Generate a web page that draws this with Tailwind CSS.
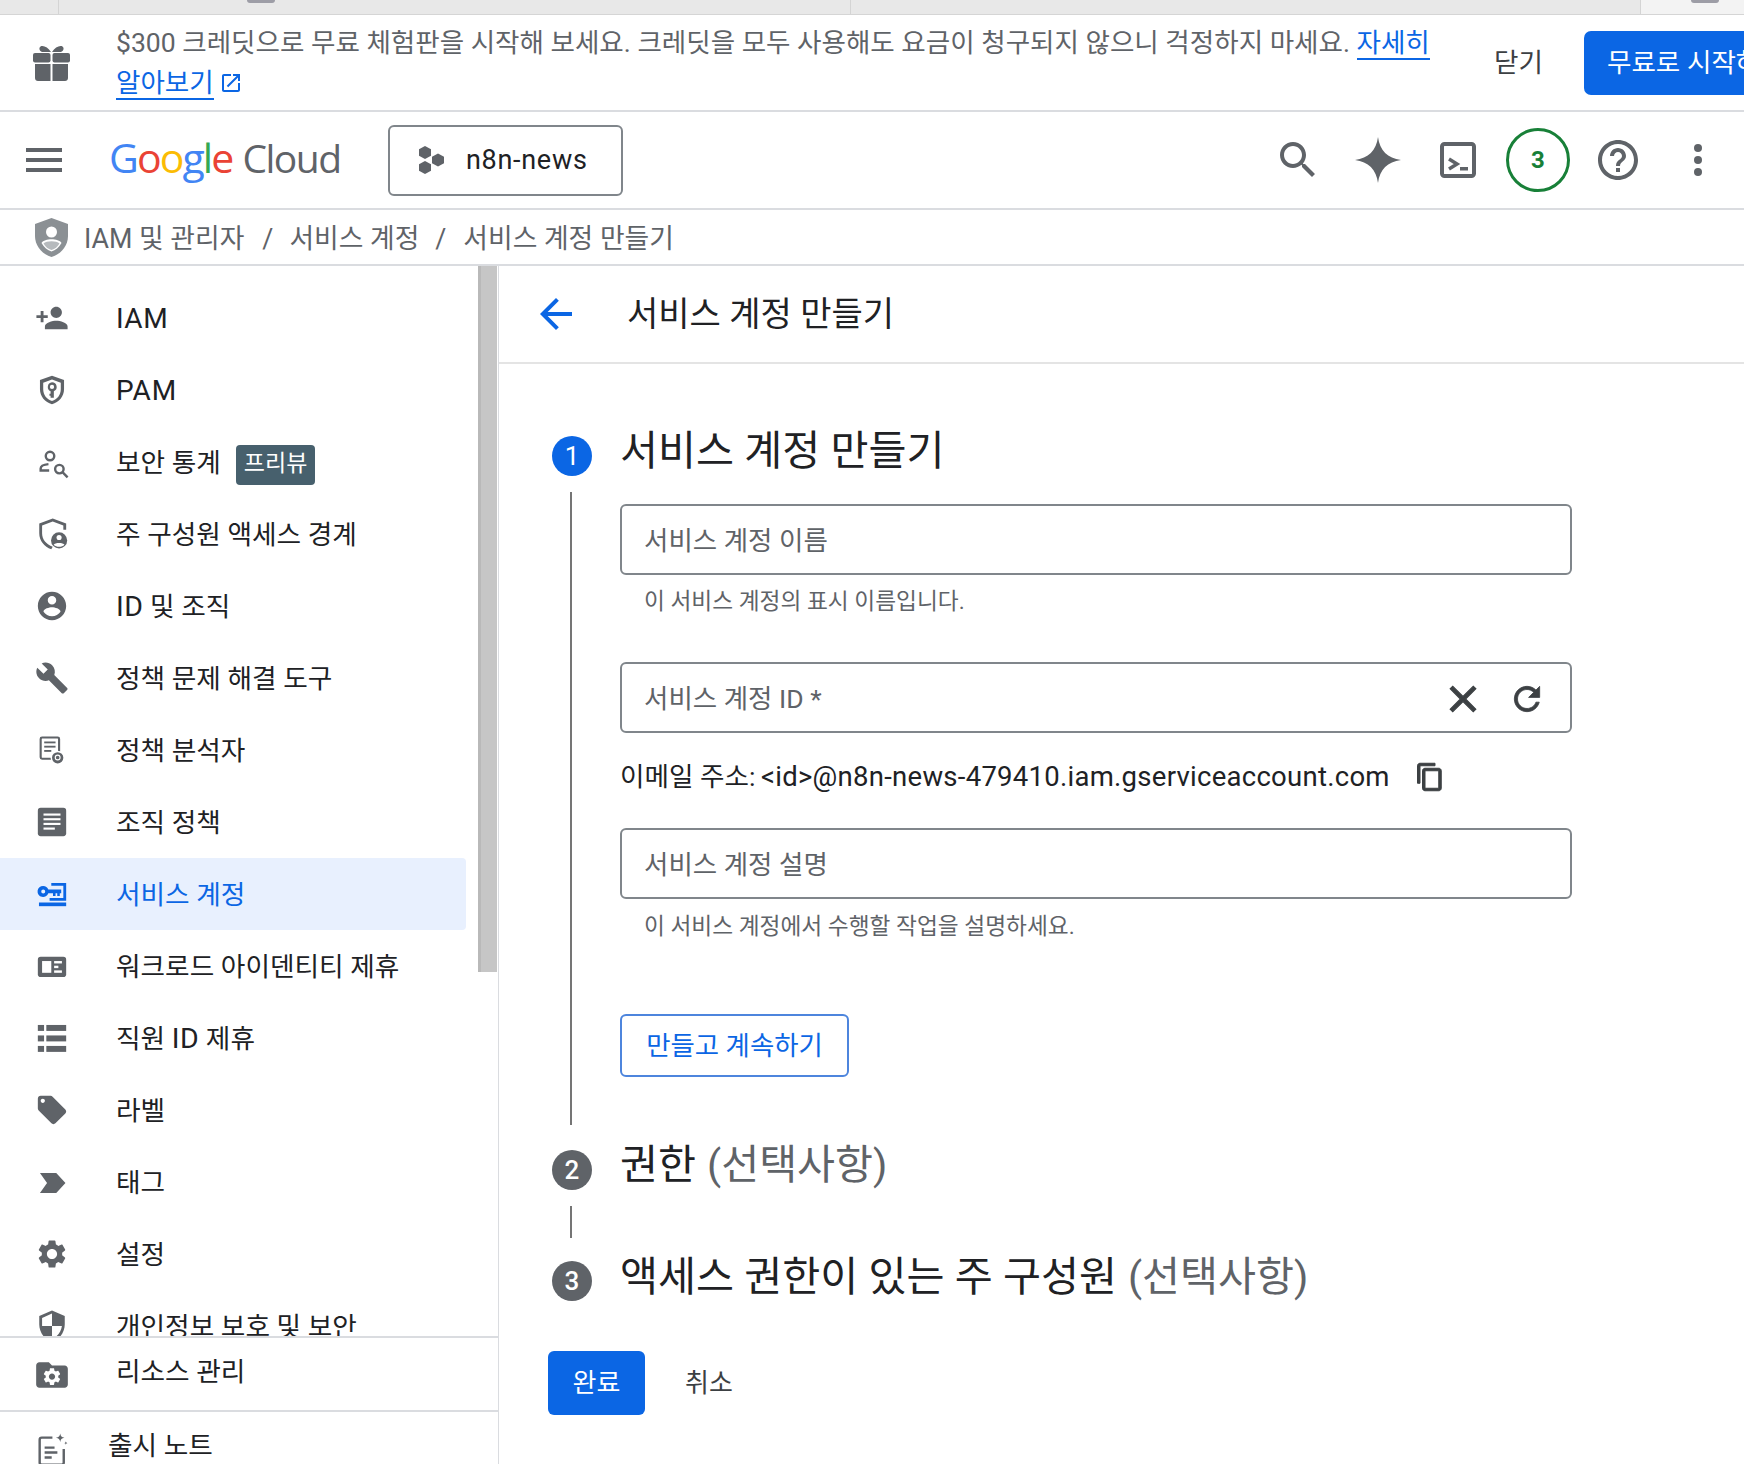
<!DOCTYPE html>
<html lang="ko">
<head>
<meta charset="utf-8">
<script src="https://cdn.jsdelivr.net/npm/@tailwindcss/browser@4"></script>
</head>
<body class="m-0 bg-white">
<div class="w-[1744px] h-[1464px] overflow-hidden flex flex-col bg-white text-[#202124] font-['Roboto','Noto_Sans_CJK_KR',sans-serif]">

  <!-- browser tab strip -->
  <div class="h-[15px] shrink-0 flex bg-[#e8e8e8] border-b border-[#d5d5d5]">
    <div class="w-[59px] border-r border-[#d4d4d4]"></div>
    <div class="w-[792px] border-r border-[#d4d4d4] pl-[188px]"><div class="w-[28px] h-[3px] rounded-b-[3px] bg-[#9d9da6]"></div></div>
    <div class="w-[790px] border-r border-[#d4d4d4]"></div>
    <div class="flex-1 bg-[#f3f3f3] pl-[50px]"><div class="w-[28px] h-[3px] rounded-b-[3px] bg-[#9d9da6]"></div></div>
  </div>

  <!-- trial banner -->
  <div class="h-[97px] shrink-0 flex items-center border-b-2 border-[#dadce0] whitespace-nowrap">
    <svg class="ml-[33px] w-[37px] h-[36px] shrink-0 fill-[#5f6368]" viewBox="0 0 37 36"><path d="M18 7C15 2 10 0 7.500 1.500 5.500 3 6.500 6 9 7zM19 7c3-5 8-7 10.500-5.500 2 1.500 1 4.500-1.500 5.500z"/><rect x="0" y="8" width="17.500" height="9.500" rx="2"/><rect x="19.500" y="8" width="17.500" height="9.500" rx="2"/><path d="M2 19h15.500v17H5c-1.700 0-3-1.300-3-3zM19.500 19H35v14c0 1.700-1.300 3-3 3H19.500z"/></svg>
    <div class="ml-[46px] w-[1331px] shrink-0 h-[80px] text-[26.55px] leading-[40px] text-[#5f6368] whitespace-normal break-keep">$300 크레딧으로 무료 체험판을 시작해 보세요. 크레딧을 모두 사용해도 요금이 청구되지 않으니 걱정하지 마세요. <a class="text-[#0b66e4] border-b-2 border-[#0b66e4]">자세히 알아보기</a> <svg class="inline-block align-[-3px] w-[24px] h-[24px] fill-[#0b66e4] -ml-[1px]" viewBox="0 0 24 24"><path d="M19 19H5V5h7V3H5c-1.110 0-2 .9-2 2v14c0 1.100.89 2 2 2h14c1.100 0 2-.9 2-2v-7h-2v7zM14 3v2h3.590l-9.830 9.830 1.410 1.410L19 6.410V10h2V3h-7z"/></svg></div>
    <span class="ml-[47px] text-[26.6px] text-[#3c4043]">닫기</span>
    <div class="ml-[41px] h-[64px] w-[260px] shrink-0 flex items-center pl-[23px] rounded-[7px] bg-[#0b66e4] text-white text-[26.6px]">무료로 시작하기</div>
  </div>

  <!-- top bar -->
  <div class="h-[98px] shrink-0 flex items-center border-b-2 border-[#dadce0]">
    <div class="ml-[26px] w-[36px] h-[24px] flex flex-col justify-between"><div class="h-[4px] bg-[#5f6368]"></div><div class="h-[4px] bg-[#5f6368]"></div><div class="h-[4px] bg-[#5f6368]"></div></div>
    <div class="ml-[47px] mb-[6px] w-[279px] flex items-baseline text-[41px] leading-[48px] tracking-[-1.9px] font-['Open_Sans','Roboto',sans-serif]"><span class="font-medium text-[#4285f4]">G</span><span class="font-medium text-[#ea4335]">o</span><span class="font-medium text-[#fbbc04]">o</span><span class="font-medium text-[#4285f4]">g</span><span class="font-medium text-[#34a853]">l</span><span class="font-medium text-[#ea4335]">e</span><span class="ml-[10px] text-[39px] tracking-[-1.5px] text-[#5f6368]">Cloud</span></div>
    <div class="h-[71px] w-[235px] flex items-center rounded-[6px] border-2 border-[#80868b]">
      <svg class="ml-[28px] w-[26px] h-[28px] fill-[#5f6368]" viewBox="0 0 26 28"><polygon points="7,0 13,3.300 13,9.700 7,13 1,9.700 1,3.300"/><polygon points="7,15 13,18.300 13,24.700 7,28 1,24.700 1,18.300"/><polygon points="20,7.500 26,10.800 26,17.200 20,20.500 14,17.200 14,10.800"/></svg>
      <span class="ml-[22px] text-[27px] tracking-[0.7px]">n8n-news</span>
    </div>
    <div class="ml-auto mr-[6px] flex items-center">
      <div class="w-[80px] flex justify-center"><svg class="w-[48px] h-[48px] fill-[#5f6368]" viewBox="0 0 24 24"><path d="M15.500 14h-.79l-.28-.27C15.410 12.590 16 11.110 16 9.500 16 5.910 13.090 3 9.500 3S3 5.910 3 9.500 5.910 16 9.500 16c1.610 0 3.090-.59 4.230-1.570l.27.28v.79l5 4.990L20.490 19l-4.990-5zm-6 0C7.010 14 5 11.990 5 9.500S7.010 5 9.500 5 14 7.010 14 9.500 11.990 14 9.500 14z"/></svg></div>
      <div class="w-[80px] flex justify-center"><svg class="w-[46px] h-[46px] fill-[#5f6368]" viewBox="0 0 24 24"><path d="M12 0C12.900 7 17 11.100 24 12 17 12.900 12.900 17 12 24 11.100 17 7 12.900 0 12 7 11.100 11.100 7 12 0Z"/></svg></div>
      <div class="w-[80px] flex justify-center"><svg class="w-[36px] h-[36px]" viewBox="0 0 36 36"><rect x="2" y="2" width="32" height="32" rx="2.500" fill="none" stroke="#5f6368" stroke-width="4"/><polyline points="9,17 17,22 9,27" fill="none" stroke="#5f6368" stroke-width="3.500"/><rect x="20" y="25" width="8" height="3.500" fill="#5f6368"/></svg></div>
      <div class="w-[80px] flex justify-center"><div class="w-[64px] h-[64px] rounded-full border-[3px] border-[#188038] flex items-center justify-center text-[24px] font-bold text-[#188038]">3</div></div>
      <div class="w-[80px] flex justify-center"><svg class="w-[48px] h-[48px] fill-[#5f6368]" viewBox="0 0 24 24"><path d="M11 18h2v-2h-2v2zm1-16C6.480 2 2 6.480 2 12s4.480 10 10 10 10-4.480 10-10S17.520 2 12 2zm0 18c-4.410 0-8-3.590-8-8s3.590-8 8-8 8 3.590 8 8-3.590 8-8 8zm0-14c-2.210 0-4 1.790-4 4h2c0-1.100.9-2 2-2s2 .9 2 2c0 2-3 1.750-3 5h2c0-2.250 3-2.500 3-5 0-2.210-1.790-4-4-4z"/></svg></div>
      <div class="w-[80px] flex flex-col items-center gap-[4px]"><div class="w-[8px] h-[8px] rounded-full bg-[#5f6368]"></div><div class="w-[8px] h-[8px] rounded-full bg-[#5f6368]"></div><div class="w-[8px] h-[8px] rounded-full bg-[#5f6368]"></div></div>
    </div>
  </div>

  <!-- breadcrumb -->
  <div class="h-[56px] shrink-0 flex items-center border-b-2 border-[#dadce0] text-[26.8px] text-[#5f6368] whitespace-nowrap">
    <svg class="ml-[35px] w-[33px] h-[39px]" viewBox="0 0 33 39"><path d="M16.500 0 0 6v12c0 10 7 18 16.500 21C26 36 33 28 33 18V6z" fill="#8b9094"/><circle cx="16.500" cy="14" r="5.500" fill="#fff"/><path d="M6.500 25c3-5 17-5 20 0-2.500 4.500-6 7-10 8.500-4-1.500-7.500-4-10-8.500z" fill="#fff"/><path d="M8.500 25.500c3-3 13-3 16 0-2 3.500-4.500 5.500-8 6.500-3.500-1-6-3-8-6.500z" fill="#b6babd"/></svg>
    <div class="mt-[4px] flex"><span class="ml-[16px]">IAM 및 관리자</span><span class="ml-[18px]">/</span><span class="ml-[16px]">서비스 계정</span><span class="ml-[16px]">/</span><span class="ml-[17px]">서비스 계정 만들기</span></div>
  </div>

  <div class="flex-1 flex min-h-0">
    <!-- sidebar -->
    <aside class="w-[499px] shrink-0 flex flex-col border-r border-[#dadce0] text-[26.7px]">
      <div class="h-[1070px] shrink-0 overflow-hidden flex">
        <nav class="w-[478px] shrink-0 pt-[16px] whitespace-nowrap">
          <div class="flex h-[72px] items-center pl-[35px]"><svg class="w-[34px] h-[34px] fill-[#5f6368] shrink-0" viewBox="0 0 24 24"><path d="M15 12c2.210 0 4-1.790 4-4s-1.790-4-4-4-4 1.790-4 4 1.790 4 4 4zm-9-2V7H4v3H1v2h3v3h2v-3h3v-2H6zm9 4c-2.670 0-8 1.340-8 4v2h16v-2c0-2.660-5.330-4-8-4z"/></svg><span class="ml-[47px] mt-[2px] text-[28px] tracking-[0.5px]">IAM</span></div>
          <div class="flex h-[72px] items-center pl-[35px]"><svg class="w-[34px] h-[34px] fill-[#5f6368] shrink-0" viewBox="0 0 24 24"><path fill-rule="evenodd" d="M12 2 3.500 5v6.500c0 5 3.500 9.300 8.500 10.500 5-1.200 8.500-5.500 8.500-10.500V5zM12 4.600 5.800 6.800v4.700c0 4 2.500 7.200 6.200 8.300 3.700-1.100 6.200-4.300 6.200-8.300V6.800zM12 6.500a3.300 3.300 0 0 1 1.300 6.330V17.500H11v-1.500h-.8v-1.400H11v-1.800a3.300 3.300 0 0 1 1-6.300zm0 1.800a1.500 1.500 0 1 0 0 3 1.500 1.500 0 0 0 0-3z"/></svg><span class="ml-[47px] mt-[2px] text-[28px] tracking-[0.8px]">PAM</span></div>
          <div class="flex h-[72px] items-center pl-[35px]"><svg class="w-[34px] h-[34px] shrink-0" viewBox="0 0 24 24" fill="none" stroke="#5f6368" stroke-width="1.700"><circle cx="10.600" cy="7.800" r="3"/><path d="M9.500 13.500c-3 .3-5.500 1.300-5.500 3v1.500h6"/><circle cx="17.200" cy="17" r="3"/><line x1="19.400" y1="19.200" x2="23" y2="22.800"/></svg><span class="ml-[47px] mt-[2px]">보안 통계</span><span class="ml-[15px] mt-[5px] h-[40px] px-[8px] flex items-center rounded-[4px] bg-[#47606d] text-white text-[23px]">프리뷰</span></div>
          <div class="flex h-[72px] items-center pl-[35px]"><svg class="w-[34px] h-[34px] fill-[#5f6368] shrink-0" viewBox="0 0 24 24"><path d="M12.500 1 3 4.500v7C3 16.700 6.500 21 11.500 22.800l1-1.800C8 19.500 5 15.800 5 11.500V6l7.500-2.800L20 6v3h2V4.500z"/><circle cx="17" cy="16.500" r="5.700"/><circle cx="17" cy="14.500" r="1.800" fill="#fff"/><path d="M13.200 19.500c.8-1.500 6.800-1.500 7.600 0-1 1-2.300 1.500-3.800 1.500s-2.800-.5-3.800-1.500z" fill="#fff"/></svg><span class="ml-[47px] mt-[2px]">주 구성원 액세스 경계</span></div>
          <div class="flex h-[72px] items-center pl-[35px]"><svg class="w-[34px] h-[34px] fill-[#5f6368] shrink-0" viewBox="0 0 24 24"><path d="M12 2C6.480 2 2 6.480 2 12s4.480 10 10 10 10-4.480 10-10S17.520 2 12 2zm0 3c1.660 0 3 1.340 3 3s-1.340 3-3 3-3-1.340-3-3 1.340-3 3-3zm0 14.200c-2.500 0-4.710-1.280-6-3.220.03-1.990 4-3.080 6-3.080 1.990 0 5.970 1.090 6 3.080-1.290 1.940-3.500 3.220-6 3.220z"/></svg><span class="ml-[47px] mt-[2px]"><span class="text-[28.5px] tracking-[0.5px]">ID</span> 및 조직</span></div>
          <div class="flex h-[72px] items-center pl-[35px]"><svg class="w-[34px] h-[34px] fill-[#5f6368] shrink-0" viewBox="0 0 24 24"><path d="M22.700 19l-9.100-9.100c.9-2.300.4-5-1.500-6.900-2-2-5-2.400-7.400-1.300L9 6 6 9 1.600 4.700C.4 7.100.9 10.100 2.900 12.100c1.900 1.900 4.600 2.400 6.900 1.500l9.100 9.100c.4.400 1 .4 1.400 0l2.300-2.300c.5-.4.5-1.100.1-1.400z"/></svg><span class="ml-[47px] mt-[2px]">정책 문제 해결 도구</span></div>
          <div class="flex h-[72px] items-center pl-[35px]"><svg class="w-[34px] h-[34px] shrink-0" viewBox="0 0 24 24"><rect x="4" y="3.200" width="13" height="15" rx="1" fill="none" stroke="#5f6368" stroke-width="1.500"/><rect x="6.500" y="6" width="8" height="1.300" fill="#5f6368"/><rect x="6.500" y="9" width="8" height="1.300" fill="#5f6368"/><rect x="6.500" y="12" width="5" height="1.300" fill="#5f6368"/><circle cx="16" cy="17.500" r="5" fill="#fff"/><circle cx="16" cy="17.500" r="4" fill="#5f6368"/><circle cx="16" cy="17.300" r="1.700" fill="none" stroke="#fff" stroke-width=".8"/></svg><span class="ml-[47px] mt-[2px]">정책 분석자</span></div>
          <div class="flex h-[72px] items-center pl-[35px]"><svg class="w-[34px] h-[34px] shrink-0" viewBox="0 0 24 24"><rect x="2" y="2" width="20" height="20" rx="2" fill="#5f6368"/><g fill="#fff"><rect x="6" y="6" width="12" height="1.500"/><rect x="6" y="9.300" width="12" height="1.500"/><rect x="6" y="12.600" width="12" height="1.500"/><rect x="6" y="15.900" width="8" height="1.500"/></g></svg><span class="ml-[47px] mt-[2px]">조직 정책</span></div>
          <div class="flex h-[72px] w-[466px] items-center pl-[35px] rounded-r-[4px] bg-[#e8f0fe] text-[#0b66e4]"><svg class="w-[34px] h-[34px] fill-[#0b66e4] shrink-0" viewBox="0 0 24 24"><path fill-rule="evenodd" d="M5.800 6.300a3.900 3.900 0 0 1 3.600 2.500H18.500v2.600h-1v2h-1.800v-2h-1.200v2h-1.800v-2H9.400a3.900 3.900 0 1 1-3.600-5.100zm0 2.500a1.400 1.400 0 1 0 0 2.800 1.400 1.400 0 0 0 0-2.800z"/><path d="M11.500 4.300H22v12.400H10.300v-1.800h9.700V6.100h-8.500z"/><rect x="2.800" y="18" width="19.200" height="2.600"/></svg><span class="ml-[47px] mt-[2px]">서비스 계정</span></div>
          <div class="flex h-[72px] items-center pl-[35px]"><svg class="w-[34px] h-[34px] shrink-0" viewBox="0 0 24 24"><rect x="2" y="5.500" width="20" height="14.300" rx="2" fill="#5f6368"/><g fill="#fff"><rect x="5" y="8.500" width="6.500" height="8.300"/><rect x="13.500" y="8.500" width="5.500" height="1.700"/><rect x="13.500" y="15.100" width="5.500" height="1.700"/><rect x="13.500" y="11.800" width="3" height="1.700"/></g></svg><span class="ml-[47px] mt-[2px]">워크로드 아이덴티티 제휴</span></div>
          <div class="flex h-[72px] items-center pl-[35px]"><svg class="w-[34px] h-[34px] fill-[#5f6368] shrink-0" viewBox="0 0 24 24"><rect x="2" y="2.800" width="4.400" height="4.200"/><rect x="8" y="2.800" width="14" height="4.200"/><rect x="2" y="10.200" width="4.400" height="4.200"/><rect x="8" y="10.200" width="14" height="4.200"/><rect x="2" y="17.600" width="4.400" height="4.200"/><rect x="8" y="17.600" width="14" height="4.200"/></svg><span class="ml-[47px] mt-[2px]">직원 <span class="text-[28.5px] tracking-[0.5px]">ID</span> 제휴</span></div>
          <div class="flex h-[72px] items-center pl-[35px]"><svg class="w-[34px] h-[34px] fill-[#5f6368] shrink-0" viewBox="0 0 24 24"><path d="M21.410 11.580l-9-9C12.050 2.220 11.550 2 11 2H4c-1.100 0-2 .9-2 2v7c0 .55.22 1.050.59 1.420l9 9c.36.36.86.58 1.410.58.55 0 1.050-.22 1.410-.59l7-7c.37-.36.59-.86.59-1.410 0-.55-.23-1.060-.59-1.420zM5.500 7C4.670 7 4 6.330 4 5.500S4.670 4 5.500 4 7 4.670 7 5.500 6.330 7 5.500 7z"/></svg><span class="ml-[47px] mt-[2px]">라벨</span></div>
          <div class="flex h-[72px] items-center pl-[35px]"><svg class="w-[34px] h-[34px] fill-[#5f6368] shrink-0" viewBox="0 0 24 24"><polygon points="3.500,5.700 15,5.700 21.500,12.700 15,19.800 3.500,19.800 8.500,12.700"/></svg><span class="ml-[47px] mt-[2px]">태그</span></div>
          <div class="flex h-[72px] items-center pl-[35px]"><svg class="w-[34px] h-[34px] fill-[#5f6368] shrink-0" viewBox="0 0 24 24"><path d="M19.140 12.940c.04-.3.06-.61.06-.94 0-.32-.02-.64-.07-.94l2.030-1.580c.18-.14.23-.41.12-.61l-1.920-3.320c-.12-.22-.37-.29-.59-.22l-2.390.96c-.5-.38-1.030-.7-1.620-.94l-.36-2.540c-.04-.24-.24-.41-.48-.41h-3.840c-.24 0-.43.17-.47.41l-.36 2.540c-.59.24-1.130.57-1.620.94l-2.390-.96c-.22-.08-.47 0-.59.22L2.740 8.870c-.12.21-.08.47.12.61l2.030 1.580c-.05.3-.09.63-.09.94s.02.64.07.94l-2.030 1.580c-.18.14-.23.41-.12.61l1.920 3.320c.12.22.37.29.59.22l2.390-.96c.5.38 1.030.7 1.620.94l.36 2.540c.05.24.24.41.48.41h3.840c.24 0 .44-.17.47-.41l.36-2.540c.59-.24 1.130-.56 1.620-.94l2.390.96c.22.08.47 0 .59-.22l1.920-3.320c.12-.22.07-.47-.12-.61l-2.010-1.580zM12 15.600c-1.980 0-3.600-1.620-3.600-3.600s1.620-3.600 3.600-3.600 3.600 1.620 3.600 3.600-1.620 3.600-3.600 3.600z"/></svg><span class="ml-[47px] mt-[2px]">설정</span></div>
          <div class="flex h-[72px] items-center pl-[35px]"><svg class="w-[34px] h-[34px] fill-[#5f6368] shrink-0" viewBox="0 0 24 24"><path d="M12 1L3 5v6c0 5.550 3.840 10.740 9 12 5.160-1.260 9-6.450 9-12V5l-9-4zm0 10.990h7c-.53 4.120-3.280 7.790-7 8.940V12H5V6.300l7-3.110v8.800z"/></svg><span class="ml-[47px] mt-[2px]">개인정보 보호 및 보안</span></div>
        </nav>
        <div class="w-[19px] h-[706px] shrink-0 bg-[#c6c6c6] border-l-[3px] border-[#b9b9b9]"></div>
      </div>
      <div class="h-[74px] shrink-0 flex items-center pl-[33px] border-t-2 border-[#dadce0]">
        <svg class="w-[38px] h-[38px] mt-[2px] fill-[#5f6368] shrink-0" viewBox="0 0 24 24"><path d="M10 4H4c-1.100 0-2 .9-2 2v12c0 1.100.9 2 2 2h16c1.100 0 2-.9 2-2V8c0-1.100-.9-2-2-2h-8l-2-2z"/><g transform="translate(5.400 6.400) scale(.55)"><path fill="#fff" d="M19.140 12.940c.04-.3.06-.61.06-.94 0-.32-.02-.64-.07-.94l2.030-1.580c.18-.14.23-.41.12-.61l-1.920-3.320c-.12-.22-.37-.29-.59-.22l-2.390.96c-.5-.38-1.030-.7-1.620-.94l-.36-2.540c-.04-.24-.24-.41-.48-.41h-3.840c-.24 0-.43.17-.47.41l-.36 2.540c-.59.24-1.130.57-1.620.94l-2.390-.96c-.22-.08-.47 0-.59.22L2.740 8.870c-.12.21-.08.47.12.61l2.030 1.580c-.05.3-.09.63-.09.94s.02.64.07.94l-2.030 1.580c-.18.14-.23.41-.12.61l1.920 3.320c.12.22.37.29.59.22l2.390-.96c.5.38 1.030.7 1.620.94l.36 2.540c.05.24.24.41.48.41h3.840c.24 0 .44-.17.47-.41l.36-2.540c.59-.24 1.130-.56 1.620-.94l2.390.96c.22.08.47 0 .59-.22l1.920-3.320c.12-.22.07-.47-.12-.61l-2.010-1.580zM12 15.600c-1.980 0-3.600-1.620-3.600-3.600s1.620-3.600 3.600-3.600 3.600 1.620 3.600 3.600-1.620 3.600-3.600 3.600z"/></g></svg>
        <span class="ml-[45px] mb-[4px]">리소스 관리</span>
      </div>
      <div class="flex-1 flex items-start pl-[34px] border-t-2 border-[#dadce0]">
        <svg class="w-[34px] h-[34px] mt-[20px] shrink-0" viewBox="0 0 24 24" fill="none" stroke="#5f6368" stroke-width="1.700"><path d="M13 4H5.500C4.600 4 4 4.600 4 5.500v16c0 .9.600 1.500 1.500 1.500h14c.9 0 1.500-.6 1.500-1.500V12"/><path d="M7.500 11h7M7.500 14.500h9M7.500 18h5"/><path d="M18.500 1c.3 2 1 2.700 3 3-2 .3-2.700 1-3 3-.3-2-1-2.700-3-3 2-.3 2.700-1 3-3z" fill="#5f6368" stroke="none"/><path d="M22.500 6.500c.1.800.5 1.200 1.300 1.300-.8.100-1.200.5-1.300 1.300-.1-.8-.5-1.200-1.300-1.300.8-.1 1.200-.5 1.300-1.300z" fill="#5f6368" stroke="none"/></svg>
        <span class="ml-[40px] mt-[14px]">출시 노트</span>
      </div>
    </aside>

    <!-- main -->
    <main class="flex-1 min-w-0 flex flex-col whitespace-nowrap">
      <div class="h-[98px] shrink-0 flex items-center pl-[33px] border-b-2 border-[#e4e4e4]">
        <svg class="w-[48px] h-[48px] fill-[#0b66e4] shrink-0" viewBox="0 0 24 24"><path d="M20 11H7.830l5.590-5.590L12 4l-8 8 8 8 1.410-1.410L7.830 13H20v-2z"/></svg>
        <h1 class="ml-[47px] text-[34px] font-normal">서비스 계정 만들기</h1>
      </div>

      <div class="pl-[53px] pt-[61px]">
        <!-- step 1 -->
        <div class="flex">
          <div class="w-[68px] shrink-0 pt-[11px] flex flex-col">
            <div class="w-[40px] h-[40px] rounded-full bg-[#0b66e4] text-white flex items-center justify-center text-[26px]">1</div>
            <div class="mt-[16px] ml-[18px] w-[2px] flex-1 bg-[#757575]"></div>
          </div>
          <div class="pb-[48px]">
            <h2 class="h-[50px] pt-[4px] flex items-center text-[41.3px] font-normal">서비스 계정 만들기</h2>
            <div class="mt-[29px] w-[952px] h-[71px] flex items-center pl-[22px] pt-[3px] rounded-[6px] border-2 border-[#80868b] text-[26.5px] text-[#5f6368]">서비스 계정 이름</div>
            <p class="mt-[12px] h-[30px] pl-[24px] flex items-center text-[22.7px] text-[#5f6368]">이 서비스 계정의 표시 이름입니다.</p>
            <div class="mt-[45px] w-[952px] h-[71px] flex items-center pl-[22px] pt-[3px] rounded-[6px] border-2 border-[#80868b] text-[26.5px] text-[#5f6368]">서비스 계정 ID *
              <svg class="ml-auto w-[44px] h-[44px] fill-[#3c4043] stroke-[#3c4043] stroke-[0.6px]" viewBox="0 0 24 24"><path d="M19 6.410L17.590 5 12 10.590 6.410 5 5 6.410 10.590 12 5 17.590 6.410 19 12 13.410 17.590 19 19 17.590 13.410 12z"/></svg>
              <svg class="ml-[23px] mr-[24px] w-[38px] h-[38px] fill-[#3c4043] stroke-[#3c4043] stroke-[0.5px]" viewBox="0 0 24 24"><path d="M17.650 6.350C16.200 4.900 14.210 4 12 4c-4.420 0-7.990 3.580-7.990 8s3.570 8 7.990 8c3.730 0 6.840-2.550 7.730-6h-2.080c-.82 2.330-3.040 4-5.650 4-3.310 0-6-2.690-6-6s2.690-6 6-6c1.660 0 3.140.69 4.220 1.780L13 11h7V4l-2.350 2.350z"/></svg>
            </div>
            <div class="mt-[24px] h-[40px] flex items-center text-[26.6px]"><span>이메일 주소: <span class="-ml-[1px] text-[27.5px] tracking-[0.27px]">&lt;id&gt;@n8n-news-479410.iam.gserviceaccount.com</span></span>
              <svg class="ml-[25px] w-[30px] h-[30px] fill-[#3c4043] stroke-[#3c4043] stroke-[0.8px]" viewBox="0 0 24 24"><path d="M16 1H4c-1.100 0-2 .9-2 2v14h2V3h12V1zm3 4H8c-1.100 0-2 .9-2 2v14c0 1.100.9 2 2 2h11c1.100 0 2-.9 2-2V7c0-1.100-.9-2-2-2zm0 16H8V7h11v14z"/></svg>
            </div>
            <div class="mt-[31px] w-[952px] h-[71px] flex items-center pl-[22px] pt-[3px] rounded-[6px] border-2 border-[#80868b] text-[26.5px] text-[#5f6368]">서비스 계정 설명</div>
            <p class="mt-[13px] h-[30px] pl-[24px] flex items-center text-[22.7px] text-[#5f6368]">이 서비스 계정에서 수행할 작업을 설명하세요.</p>
            <div class="mt-[72px] w-[229px] h-[63px] flex items-center justify-center pt-[2px] rounded-[6px] border-2 border-[#4d85dd] text-[#0b66e4] text-[26.4px]">만들고 계속하기</div>
          </div>
        </div>
        <!-- step 2 -->
        <div class="flex">
          <div class="w-[68px] shrink-0 pt-[25px] flex flex-col">
            <div class="w-[40px] h-[40px] rounded-full bg-[#5f6368] text-white flex items-center justify-center text-[26px] font-medium">2</div>
            <div class="mt-[16px] ml-[18px] w-[2px] h-[32px] bg-[#757575]"></div>
          </div>
          <h2 class="mt-[13px] h-[50px] pt-[6px] flex items-center gap-[11px] text-[41.3px] font-normal">권한 <span class="text-[#5f6368]">(선택사항)</span></h2>
        </div>
        <!-- step 3 -->
        <div class="flex">
          <div class="w-[68px] shrink-0 pt-[23px]">
            <div class="w-[40px] h-[40px] rounded-full bg-[#5f6368] text-white flex items-center justify-center text-[26px] font-medium">3</div>
          </div>
          <h2 class="mt-[12px] h-[50px] pt-[6px] flex items-center gap-[11px] text-[41.3px] font-normal">액세스 권한이 있는 주 구성원 <span class="text-[#5f6368]">(선택사항)</span></h2>
        </div>
        <!-- actions -->
        <div class="mt-[50px] -ml-[4px] flex items-center text-[26px]">
          <div class="w-[97px] h-[64px] flex items-center justify-center rounded-[6px] bg-[#0b66e4] text-white">완료</div>
          <span class="ml-[40px] text-[#3c4043]">취소</span>
        </div>
      </div>
    </main>
  </div>
</div>
</body>
</html>
